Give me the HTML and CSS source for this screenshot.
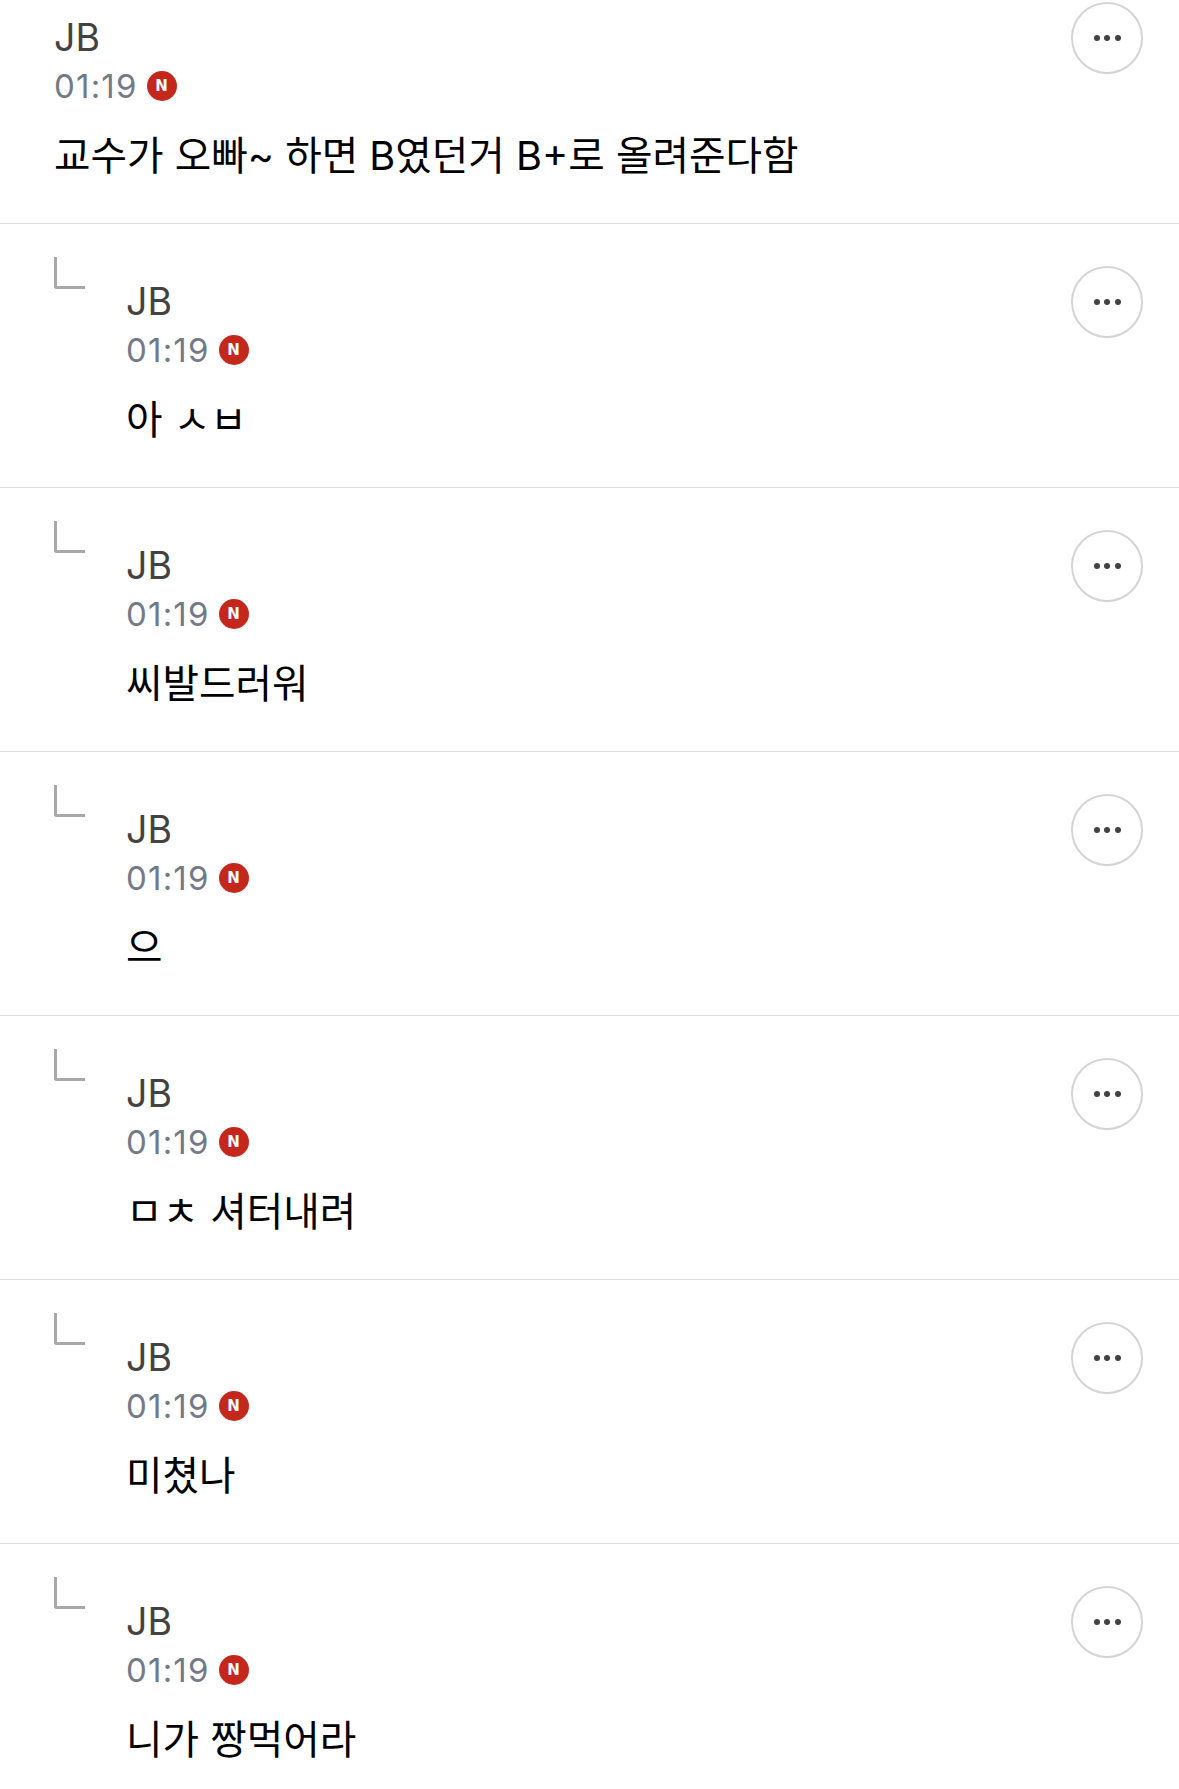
FILE: index.html
```html
<!DOCTYPE html>
<html lang="ko">
<head>
	<meta charset="UTF-8">
	<title>댓글</title>
	<link rel="stylesheet" href="styles.css">
</head>

<body>

<ul class="comments">
	<li class="comment comment-first">
		<div class="comment-body">
			<div class="author">JB</div>
			<div class="meta"><span class="time">01:19</span><span class="new-badge">N</span></div>
			<p class="text">교수가 오빠~ 하면 B였던거 B+로 올려준다함</p>
		</div>
		<button class="more" type="button" aria-label="더보기"><i></i><i></i><i></i></button>
	</li>
	<li class="comment comment-reply">
		<span class="hook"></span>
		<div class="comment-body">
			<div class="author">JB</div>
			<div class="meta"><span class="time">01:19</span><span class="new-badge">N</span></div>
			<p class="text">아 ㅅㅂ</p>
		</div>
		<button class="more" type="button" aria-label="더보기"><i></i><i></i><i></i></button>
	</li>
	<li class="comment comment-reply">
		<span class="hook"></span>
		<div class="comment-body">
			<div class="author">JB</div>
			<div class="meta"><span class="time">01:19</span><span class="new-badge">N</span></div>
			<p class="text">씨발드러워</p>
		</div>
		<button class="more" type="button" aria-label="더보기"><i></i><i></i><i></i></button>
	</li>
	<li class="comment comment-reply">
		<span class="hook"></span>
		<div class="comment-body">
			<div class="author">JB</div>
			<div class="meta"><span class="time">01:19</span><span class="new-badge">N</span></div>
			<p class="text">으</p>
		</div>
		<button class="more" type="button" aria-label="더보기"><i></i><i></i><i></i></button>
	</li>
	<li class="comment comment-reply">
		<span class="hook"></span>
		<div class="comment-body">
			<div class="author">JB</div>
			<div class="meta"><span class="time">01:19</span><span class="new-badge">N</span></div>
			<p class="text">ㅁㅊ 셔터내려</p>
		</div>
		<button class="more" type="button" aria-label="더보기"><i></i><i></i><i></i></button>
	</li>
	<li class="comment comment-reply">
		<span class="hook"></span>
		<div class="comment-body">
			<div class="author">JB</div>
			<div class="meta"><span class="time">01:19</span><span class="new-badge">N</span></div>
			<p class="text">미쳤나</p>
		</div>
		<button class="more" type="button" aria-label="더보기"><i></i><i></i><i></i></button>
	</li>
	<li class="comment comment-reply">
		<span class="hook"></span>
		<div class="comment-body">
			<div class="author">JB</div>
			<div class="meta"><span class="time">01:19</span><span class="new-badge">N</span></div>
			<p class="text">니가 짱먹어라</p>
		</div>
		<button class="more" type="button" aria-label="더보기"><i></i><i></i><i></i></button>
	</li>
</ul>

</body>
</html>
```

FILE: styles.css
```css
html, body {
	height: 1789px;
	overflow: hidden;
}

body {
	margin: 0;
	background: #fff;
	color: #000;
	font-family: Inter, "Noto Sans CJK KR", sans-serif;
}

.comments {
	list-style: none;
	margin: 0;
	padding: 0;
}

.comment {
	display: flex;
	box-sizing: border-box;
	height: 264px;
	padding: 42px 36px 0 54px;
	border-bottom: 1px solid #dcdcdc;
}

.comment-first {
	height: 224px;
	padding-top: 2px;
}

.hook {
	flex: none;
	box-sizing: border-box;
	width: 31px;
	height: 32px;
	margin-top: -9px;
	margin-right: 41px;
	border-left: 3px solid #a8a8a8;
	border-bottom: 3px solid #a8a8a8;
	border-bottom-left-radius: 3px;
}

.comment-body {
	flex: 1;
	min-width: 0;
}

.author {
	font-size: 37.5px;
	line-height: 72px;
	color: #424242;
}

.meta {
	display: flex;
	align-items: center;
	gap: 9px;
	height: 36px;
	margin-top: -6px;
}

.time {
	font-size: 33px;
	line-height: 36px;
	letter-spacing: 1.2px;
	color: #737a86;
}

.new-badge {
	display: flex;
	align-items: center;
	justify-content: center;
	width: 30px;
	height: 30px;
	border-radius: 50%;
	background: #c4281c;
	color: #fff;
	font-family: "DejaVu Sans", sans-serif;
	font-size: 15px;
	font-weight: 700;
}

.text {
	margin: 27px 0 0;
	font-size: 39.7px;
	line-height: 50px;
	color: #000;
}

.more {
	flex: none;
	display: flex;
	align-items: center;
	justify-content: center;
	gap: 4.5px;
	box-sizing: border-box;
	width: 72px;
	height: 72px;
	padding: 0;
	border: 2px solid #d4d4d4;
	border-radius: 50%;
	background: #fff;
}

.more i {
	width: 6px;
	height: 6px;
	border-radius: 50%;
	background: #424242;
}
```
